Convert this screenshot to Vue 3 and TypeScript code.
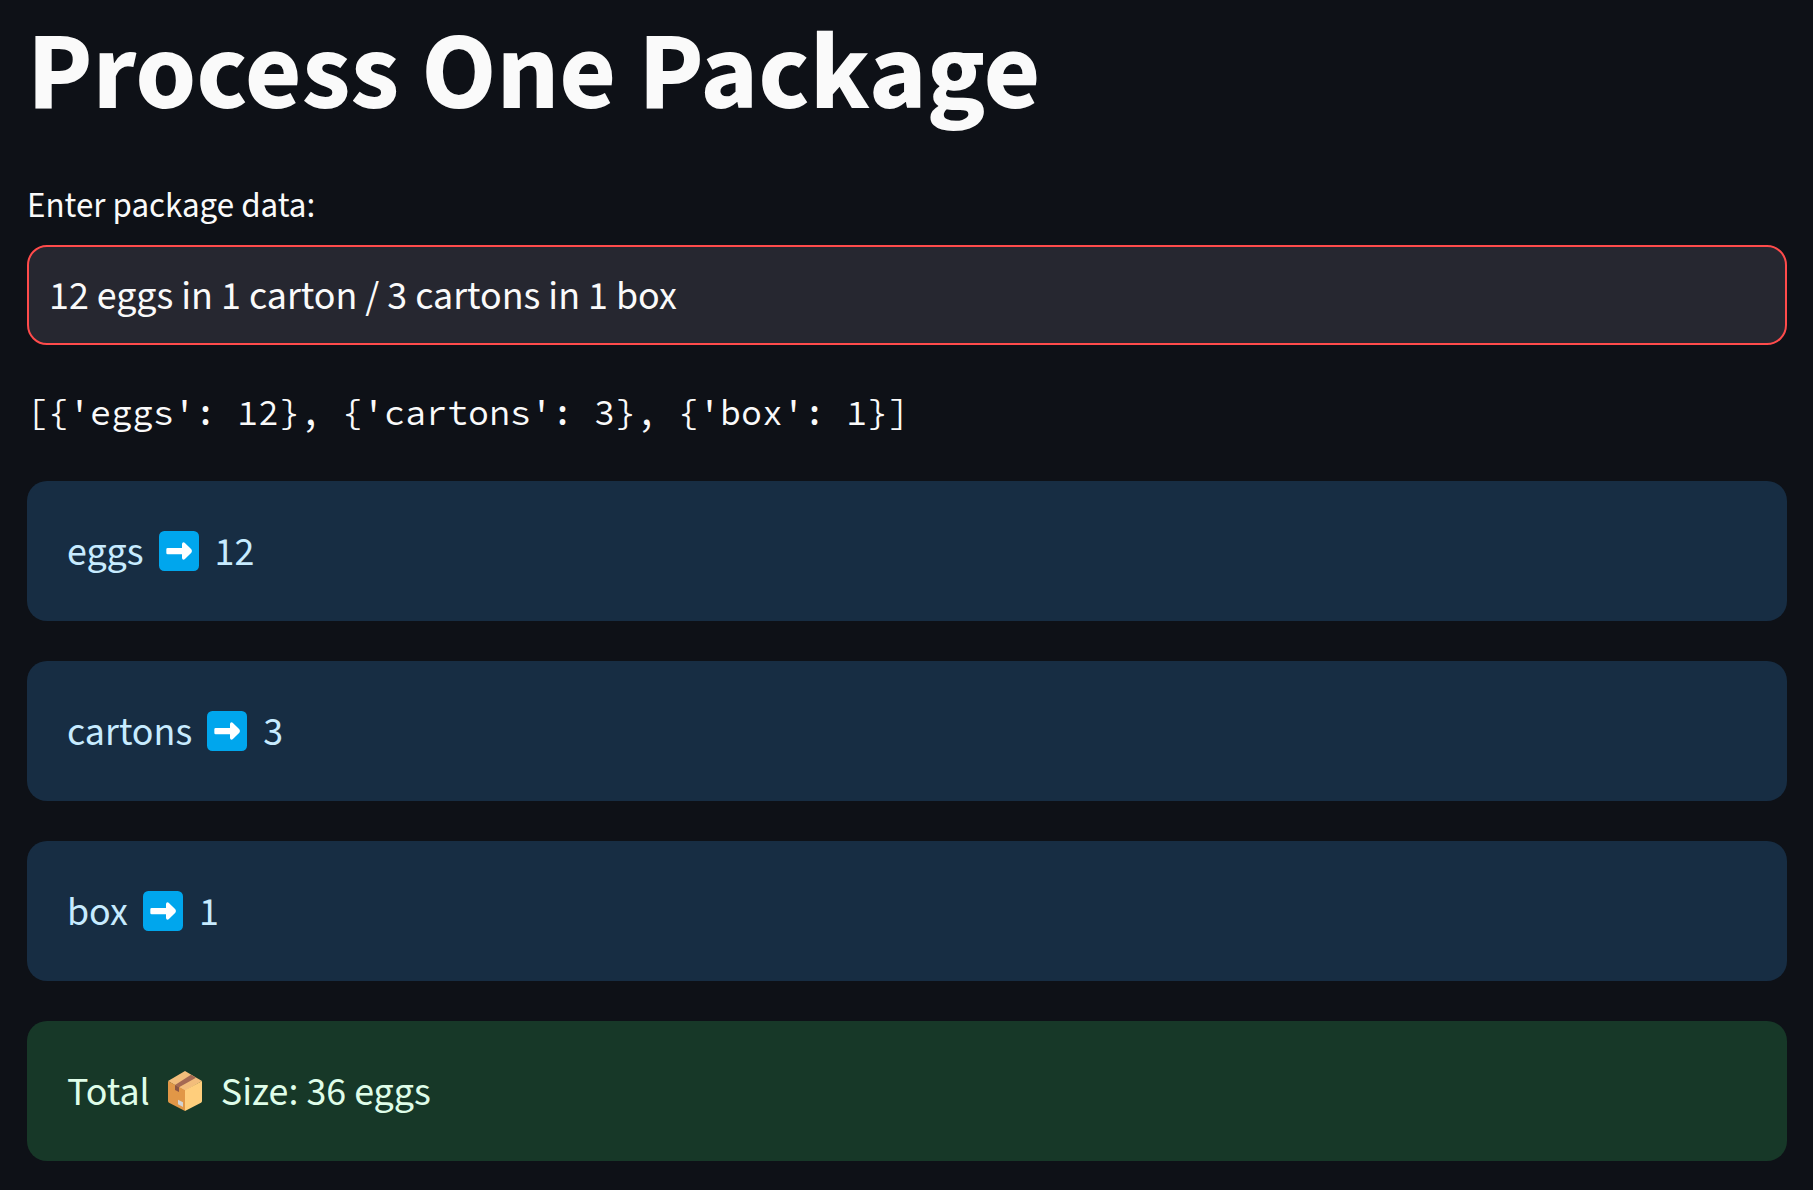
<script setup lang="ts">
import { computed, ref } from 'vue'

interface Level {
  name: string
  count: number
}

const packageData = ref('12 eggs in 1 carton / 3 cartons in 1 box')

const levels = computed<Level[]>(() => {
  const parts = packageData.value.split('/').map((part) => part.trim())
  const result: Level[] = []
  let outer = ''
  for (const part of parts) {
    const match = /^(\d+)\s+(\w+)\s+in\s+1\s+(\w+)$/.exec(part)
    if (!match) continue
    result.push({ name: match[2], count: Number(match[1]) })
    outer = match[3]
  }
  if (outer) result.push({ name: outer, count: 1 })
  return result
})

const parsed = computed(
  () => '[' + levels.value.map((l) => `{'${l.name}': ${l.count}}`).join(', ') + ']'
)
const total = computed(() => levels.value.reduce((size, l) => size * l.count, 1))
const unit = computed(() => levels.value[0]?.name ?? '')
</script>

<template>
  <main class="page">
    <h1 class="title">Process One Package</h1>

    <label class="label" for="package-data">Enter package data:</label>
    <input id="package-data" v-model="packageData" class="field" type="text" autocomplete="off" spellcheck="false" />

    <pre class="parsed">{{ parsed }}</pre>

    <section class="alerts">
      <p v-for="level in levels" :key="level.name" class="alert info">
        {{ level.name }}
        <svg class="emoji" viewBox="0 0 120 120" role="img" aria-label="right arrow">
          <rect width="120" height="120" rx="16" fill="#00a6ed" />
          <path
            d="M26 51H69V39Q70 32 77 35L97 55Q101 60 97 65L77 85Q70 88 69 81V70H26Q22 70 22 66V55Q22 51 26 51Z"
            fill="#fff"
          />
        </svg>
        {{ level.count }}
      </p>
      <p class="alert success">
        Total
        <svg class="emoji" viewBox="0 0 120 120" role="img" aria-label="package">
          <path d="M60 0L111 30L60 60L9 30Z" fill="#f3bd7b" />
          <path d="M9 30L60 58V120L12 95Q9 93 9 90Z" fill="#e19747" />
          <path d="M111 30L60 58V120L108 95Q111 93 111 90Z" fill="#ffce7c" />
          <path d="M30 42L78 11L93 20L42 49Z" fill="#a56953" />
          <path d="M30 42L42 49V63L30 57Z" fill="#8c5543" />
          <path d="M39 86L54 94V108L39 100Z" fill="#d3d3d3" />
        </svg>
        Size: {{ total }} {{ unit }}
      </p>
    </section>
  </main>
</template>

<style>
body {
  margin: 0;
  background: #0e1117;
}
</style>

<style scoped>
.page {
  box-sizing: border-box;
  display: flex;
  flex-direction: column;
  padding: 8px 26px 29px 27px;
  color: #fafafa;
  font-family: 'Source Sans 3', 'Source Sans Pro', 'Noto Sans', sans-serif;
  font-size: 40px;
  line-height: 60px;
}

.title {
  margin: 0 0 40px;
  font-size: 110px;
  font-weight: 700;
  line-height: 132px;
}

.label {
  margin-bottom: 13px;
  font-size: 35px;
  line-height: 52px;
}

.field {
  box-sizing: border-box;
  width: 100%;
  height: 100px;
  padding: 2px 20px 0;
  border: 2px solid #ff4b4b;
  border-radius: 20px;
  outline: none;
  background: #262730;
  color: #fafafa;
  font: inherit;
}

.parsed {
  margin: 42px 0;
  font-family: 'Source Code Pro', 'Liberation Mono', monospace;
  font-size: 35px;
  line-height: 52px;
}

.alerts {
  display: flex;
  flex-direction: column;
  gap: 40px;
}

.alert {
  margin: 0;
  padding: 42px 40px 38px;
  border-radius: 20px;
}

.info {
  background: #172d43;
  color: #c7ebff;
}

.success {
  background: #173828;
  color: #dffde9;
}

.emoji {
  width: 40px;
  height: 40px;
  margin: 0 8px 0 7px;
  vertical-align: -6px;
}
</style>
